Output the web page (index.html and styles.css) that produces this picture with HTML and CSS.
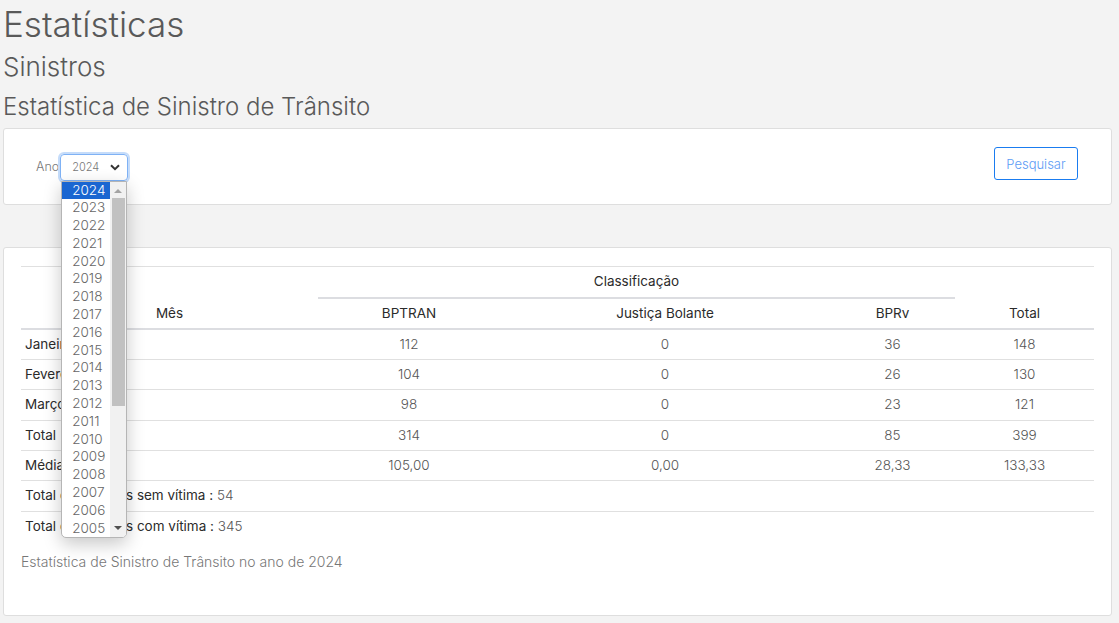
FILE: index.html
```html
<!DOCTYPE html>
<html lang="pt-BR">
<head>
<meta charset="utf-8">
<title>Estatísticas</title>
<link rel="stylesheet" href="styles.css">
</head>
<body>
<h1 class="title">Estatísticas</h1>
<h2 class="subtitle">Sinistros</h2>
<h3 class="section">Estatística de Sinistro de Trânsito</h3>

<div class="card filter">
  <label class="label">Ano</label>
  <div class="select-wrap">
    <div class="select-box">
      <span>2024</span>
      <svg class="chev" width="10" height="7" viewBox="0 0 10 7"><path d="M1 1.2 L5 5.2 L9 1.2" fill="none" stroke="#333" stroke-width="2"/></svg>
    </div>
    <div class="dropdown">
      <ul class="options">
        <li class="selected">2024</li><li>2023</li><li>2022</li><li>2021</li><li>2020</li>
        <li>2019</li><li>2018</li><li>2017</li><li>2016</li><li>2015</li>
        <li>2014</li><li>2013</li><li>2012</li><li>2011</li><li>2010</li>
        <li>2009</li><li>2008</li><li>2007</li><li>2006</li><li>2005</li>
      </ul>
      <div class="scrollbar">
        <span class="arrow up"></span>
        <span class="thumb"></span>
        <span class="arrow down"></span>
      </div>
    </div>
  </div>
  <button class="btn">Pesquisar</button>
</div>

<div class="card results">
  <table class="stats">
    <thead>
      <tr>
        <th rowspan="2" class="c-mes">Mês</th>
        <th colspan="3" class="c-class">Classificação</th>
        <th rowspan="2" class="c-total">Total</th>
      </tr>
      <tr>
        <th class="c-bptran">BPTRAN</th>
        <th class="c-jb">Justiça Bolante</th>
        <th class="c-bprv">BPRv</th>
      </tr>
    </thead>
    <tbody>
      <tr><td class="name">Janeiro</td><td>112</td><td>0</td><td>36</td><td>148</td></tr>
      <tr><td class="name">Fevereiro</td><td>104</td><td>0</td><td>26</td><td>130</td></tr>
      <tr><td class="name">Março</td><td>98</td><td>0</td><td>23</td><td>121</td></tr>
      <tr><td class="name">Total</td><td>314</td><td>0</td><td>85</td><td>399</td></tr>
      <tr><td class="name">Média</td><td>105,00</td><td>0,00</td><td>28,33</td><td>133,33</td></tr>
      <tr><td colspan="5" class="summary"><strong>Total de sinistros sem vítima :</strong> 54</td></tr>
      <tr><td colspan="5" class="summary"><strong>Total de sinistros com vítima :</strong> 345</td></tr>
    </tbody>
  </table>
  <p class="caption">Estatística de Sinistro de Trânsito no ano de 2024</p>
</div>
</body>
</html>
```
FILE: styles.css
```css
* { box-sizing: border-box; }
html, body { margin: 0; }
body {
  background: #f3f3f3;
  font-family: "Inter", "Open Sans", "Liberation Sans", sans-serif;
  color: #555;
  padding: 0 7px 8px 3px;
}
.title {
  margin: 0;
  font-size: 35px;
  font-weight: 300;
  line-height: 48px;
  color: #595959;
}
.subtitle {
  margin: 0;
  font-size: 26px;
  font-weight: 300;
  line-height: 38px;
  color: #595959;
}
.section {
  margin: 0;
  font-size: 24px;
  font-weight: 300;
  line-height: 42px;
  color: #595959;
}
.card {
  background: #fff;
  border: 1px solid #dedede;
  border-radius: 3px;
}
.filter {
  height: 77px;
  display: flex;
  align-items: center;
  padding: 0 33px 0 32px;
}
.label {
  font-size: 12.5px;
  font-weight: 300;
  color: #777;
}
.select-wrap {
  position: relative;
  margin-top: 1px;
  margin-left: 1px;
}
.select-box {
  width: 68px;
  height: 27px;
  border: 1px solid #7fb2f5;
  border-radius: 4px;
  box-shadow: 0 0 0 2px #c5dcfa;
  display: flex;
  align-items: center;
  justify-content: space-between;
  padding: 0 7px 0 11px;
  font-size: 11px;
  font-weight: 300;
  color: #777;
}
.chev { display: block; }
.dropdown {
  position: absolute;
  left: 1px;
  top: 27px;
  width: 66px;
  height: 357px;
  background: #fff;
  border: 1px solid #b5b5b5;
  border-radius: 0 0 5px 5px;
  box-shadow: 0 6px 18px rgba(0,0,0,0.22);
  display: flex;
  overflow: hidden;
  z-index: 5;
}
.options {
  list-style: none;
  margin: 0;
  padding: 0;
  flex: 1;
}
.options li {
  height: 17.8px;
  line-height: 17.8px;
  padding-left: 10px;
  font-size: 13.5px;
  font-weight: 300;
  color: #666;
}
.options li.selected {
  background: #1a66d1;
  color: #fff;
}
.scrollbar {
  width: 16px;
  position: relative;
  background: #f1f1f1;
  display: flex;
  flex-direction: column;
  align-items: center;
}
.arrow {
  width: 0; height: 0;
  border-left: 4px solid transparent;
  border-right: 4px solid transparent;
}
.arrow.up {
  margin-top: 7px;
  border-bottom: 4px solid #a3a3a3;
}
.arrow.down {
  position: absolute;
  bottom: 7px;
  border-top: 4px solid #505050;
}
.thumb {
  margin-top: 5px;
  width: 13px;
  height: 208px;
  background: #c1c1c1;
}
.btn {
  margin-left: auto;
  margin-top: -6px;
  width: 84px;
  height: 33px;
  background: #fff;
  border: 1px solid #1a7cf0;
  border-radius: 3px;
  color: #5d9cf5;
  font-family: inherit;
  font-size: 13px;
  font-weight: 300;
}
.results {
  margin-top: 42px;
  padding: 18px 17px 0 17px;
  height: 369px;
}
.stats {
  width: 100%;
  border-collapse: collapse;
  font-size: 13.5px;
  font-weight: 300;
  color: #555;
}
.stats th, .stats td {
  padding: 5px 4px;
  line-height: 19.3px;
  border-top: 1px solid #e0e0e0;
  text-align: center;
}
.stats th {
  font-weight: 400;
  color: #2b2b2b;
  vertical-align: bottom;
}
.stats thead tr:first-child th { height: 31px; }
.stats .c-mes { width: 297px; border-bottom: 2px solid #dcdde1; }
.stats .c-class { border-bottom: 2px solid #dcdde1; }
.stats .c-total { width: 139px; border-bottom: 2px solid #dcdde1; }
.stats .c-bptran { width: 182px; border-bottom: 2px solid #dcdde1; }
.stats .c-jb { width: 330px; border-bottom: 2px solid #dcdde1; }
.stats .c-bprv { width: 125px; border-bottom: 2px solid #dcdde1; }
.stats td.name {
  text-align: left;
  color: #2b2b2b;
  font-weight: 400;
}
.stats td.summary {
  text-align: left;
}
.stats td.summary strong {
  font-weight: 400;
  color: #2b2b2b;
}
.caption {
  margin: 12px 0 0 0;
  font-size: 14px;
  font-weight: 300;
  color: #777;
}
```
